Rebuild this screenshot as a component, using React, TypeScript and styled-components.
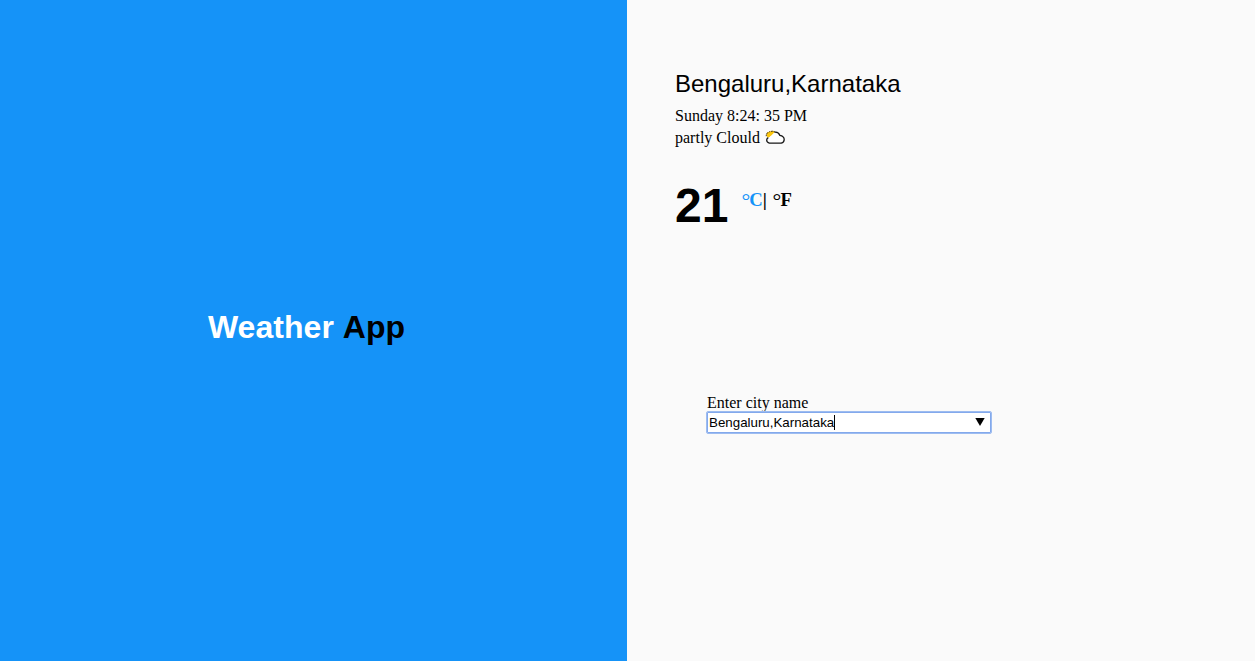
import React from "react";
import styled, { createGlobalStyle } from "styled-components";

const sans = `"Liberation Sans", Arial, sans-serif`;
const serif = `"Liberation Serif", "Times New Roman", serif`;

const GlobalStyle = createGlobalStyle`
  * { box-sizing: border-box; }
  body { margin: 0; background: #fafafa; color: #000; font: 16px/18px ${serif}; }
`;

const Page = styled.main`
  display: grid;
  grid-template-columns: 627px 1fr;
  height: 661px;
  overflow: hidden;
`;

const Brand = styled.section`
  display: flex;
  align-items: center;
  justify-content: center;
  padding: 0 14px 7px 0;
  background: #1593f8;
`;

const Title = styled.h1`
  margin: 0;
  font: bold 32px/37px ${sans};
  word-spacing: 1px;
  letter-spacing: 0.06px;
  color: #000;
`;

const TitleAccent = styled.span`
  color: #fff;
`;

const Details = styled.section`
  display: flex;
  flex-direction: column;
  align-items: flex-start;
  padding: 70px 48px 0;
`;

const City = styled.h2`
  margin: 0 0 9px;
  font: normal 24px/28px ${sans};
`;

const Line = styled.p`
  display: flex;
  align-items: center;
  gap: 5px;
  height: 18px;
  margin: 0 0 4px;
`;

const Temperature = styled.div`
  display: flex;
  align-items: flex-start;
  gap: 13px;
  margin-top: 27px;
  height: 55px;
`;

const Degrees = styled.span`
  font: bold 48px/55px ${sans};
`;

const Units = styled.div`
  display: flex;
  padding-top: 12px;
  font: bold 18.72px/20px ${serif};
  white-space: pre;
`;

const Unit = styled.span<{ $active?: boolean }>`
  color: ${(p) => (p.$active ? "#1593f8" : "#000")};
  word-spacing: 1px;
`;

const Ring = styled.span`
  font-size: 22px;
  font-weight: normal;
  line-height: 0;
  vertical-align: -2px;
  letter-spacing: -0.9px;
`;

const Form = styled.form`
  display: flex;
  flex-direction: column;
  margin: 161px 0 0 31px;
`;

const Label = styled.label`
  height: 17px;
  padding-left: 1px;
`;

const Field = styled.div`
  display: flex;
  align-items: center;
  justify-content: space-between;
  width: 286px;
  height: 23px;
  padding: 0 6px 1px 2px;
  border: 1px solid #9dbcf0;
  border-radius: 2px;
  box-shadow: inset 0 0 0 1px #83a9ec;
  background: #fff;
  font: 13.333px/15px ${sans};
`;

const Value = styled.span`
  border-right: 1px solid #000;
`;

const CloudIcon = () => (
  <svg width="20" height="16" viewBox="0 0 20 16" fill="none">
    <path d="M1.5 5.5 2 2.5 5 1.5 7.5.8l3 1.2L9 5 3 8Z" fill="#fbc60d" />
    <path d="M1.2 6.2 1.5 3.5 3.5 2.5 4.8 1.5 8 1.2l2.2.9" stroke="#55441c" strokeWidth="1" strokeDasharray="1.8 .8" />
    <path d="M4.3 13.2C2.3 12.3 1.5 11.2 1.7 9.8c.2-1.4 1.2-2.2 2.8-2.5C4.9 6.7 5.5 6 6.5 5.3L9.5 2.3c2.4-.4 4.4.6 5.3 3 2.4.4 4.4 2 4.4 4.3 0 1.8-1 3.1-2.9 3.6Z" fill="#fff" />
    <path d="M9.5 2.3c2.4-.4 4.4.6 5.3 3 2.4.4 4.4 2 4.4 4.3 0 1.8-1 3.1-2.9 3.6h-12C2.3 12.3 1.5 11.2 1.7 9.8c.2-1.4.8-1.8 1.6-2.2" stroke="#191919" strokeWidth="1.3" />
  </svg>
);

const Arrow = () => (
  <svg width="10" height="8" viewBox="0 0 10 8">
    <path d="M.3 0h9.4L5 8Z" fill="#000" />
  </svg>
);

export default function App() {
  return (
    <>
      <GlobalStyle />
      <Page>
        <Brand>
          <Title><TitleAccent>Weather</TitleAccent> App</Title>
        </Brand>
        <Details>
          <City>Bengaluru,Karnataka</City>
          <Line>Sunday 8:24: 35 PM</Line>
          <Line>partly Clould <CloudIcon /></Line>
          <Temperature>
            <Degrees>21</Degrees>
            <Units>
              <Unit $active><Ring>°</Ring>C</Unit>
              <Unit>| <Ring>°</Ring>F</Unit>
            </Units>
          </Temperature>
          <Form>
            <Label>Enter city name</Label>
            <Field><Value>Bengaluru,Karnataka</Value><Arrow /></Field>
          </Form>
        </Details>
      </Page>
    </>
  );
}
